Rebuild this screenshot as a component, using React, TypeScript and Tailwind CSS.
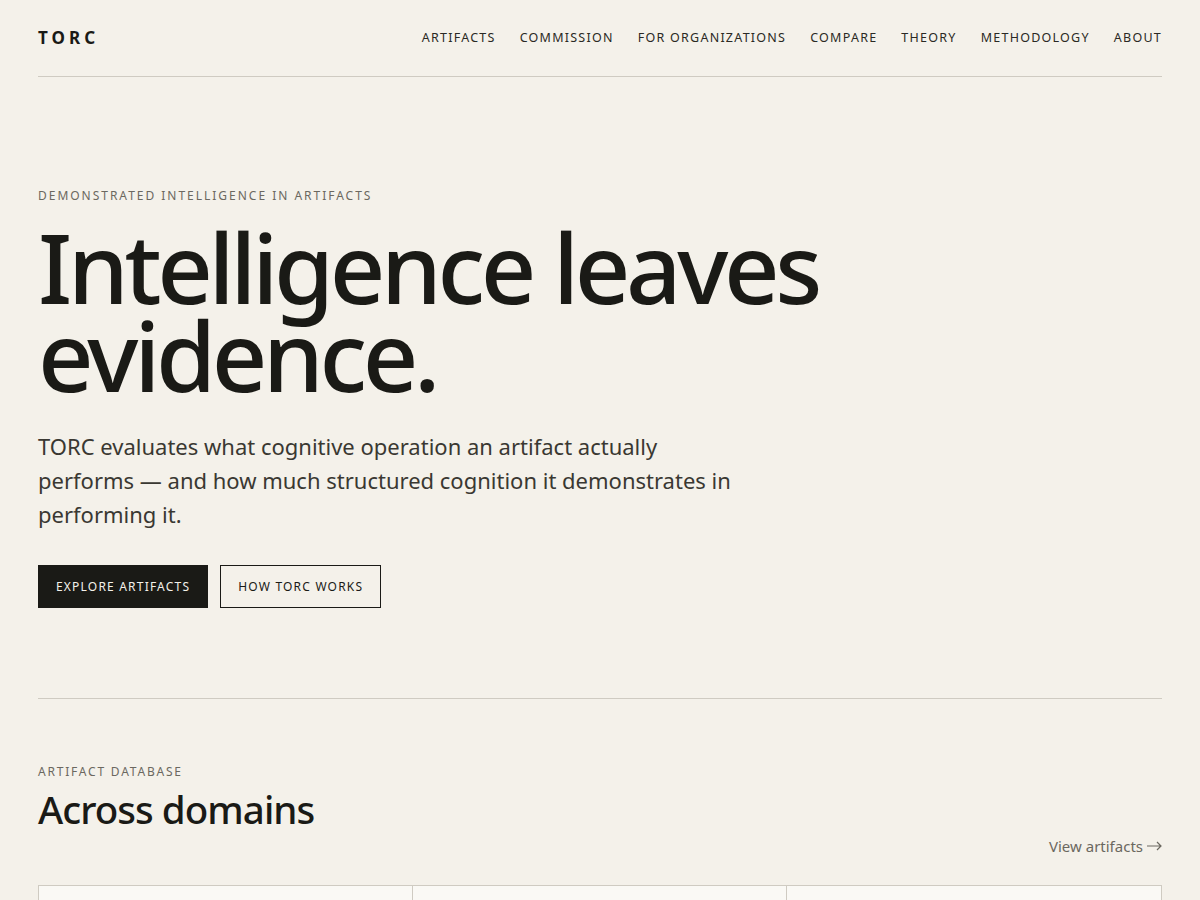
export default function App() {
  const nav = ["Artifacts", "Commission", "For Organizations", "Compare", "Theory", "Methodology", "About"];
  return (
    <main className="min-h-screen bg-[#f4f1ea] text-[#1a1a16] font-['Noto_Sans',sans-serif]">
      <div className="px-[38px]">
        {/* Header */}
        <header className="flex items-center justify-between h-[77px] border-b border-[#cfcbc2]">
          <div className="text-[17px] font-bold tracking-[0.24em]">TORC</div>
          <nav className="flex gap-[24px]">
            {nav.map((n) => (
              <a key={n} href="#" className="text-[12.5px] uppercase tracking-[0.1em] text-[#2a2924]">
                {n}
              </a>
            ))}
          </nav>
        </header>

        {/* Hero */}
        <section className="pt-[110px] pb-[90px] border-b border-[#cfcbc2]">
          <p className="text-[12px] uppercase tracking-[0.165em] text-[#6b6860]">Demonstrated intelligence in artifacts</p>
          <h1 className="mt-[17px] text-[97px] leading-[88px] font-medium tracking-[-0.045em]">
            Intelligence leaves
            <br />
            evidence.
          </h1>
          <p className="mt-[31px] max-w-[700px] text-[22px] leading-[34px] text-[#3a3832]">
            TORC evaluates what cognitive operation an artifact actually performs — and how much structured cognition it demonstrates in performing it.
          </p>
          <div className="mt-[34px] flex gap-[12px]">
            <a href="#" className="h-[43px] px-[18px] flex items-center bg-[#1a1a16] text-[#f4f1ea] text-[12px] uppercase tracking-[0.1em]">
              Explore artifacts
            </a>
            <a href="#" className="h-[43px] px-[17px] flex items-center border border-[#1a1a16] text-[12px] uppercase tracking-[0.1em]">
              How TORC works
            </a>
          </div>
        </section>

        {/* Artifact database */}
        <section className="pt-[64px]">
          <p className="text-[12px] uppercase tracking-[0.15em] text-[#6b6860]">Artifact database</p>
          <h2 className="mt-[2px] text-[38.5px] leading-[52px] font-medium tracking-[-0.025em]">Across domains</h2>
          <div className="flex justify-end">
            <a href="#" className="flex items-center gap-[4px] text-[15px] text-[#6b6860]">
              View artifacts
              <svg width="15" height="10" viewBox="0 0 15 10" fill="none" stroke="currentColor" strokeWidth="1.2">
                <path d="M0 5h14M10 1l4 4-4 4" />
              </svg>
            </a>
          </div>
          <div className="mt-[27px] grid grid-cols-3 border border-[#cfcbc2] bg-[#faf9f5] h-[200px]">
            <div className="border-r border-[#cfcbc2]" />
            <div className="border-r border-[#cfcbc2]" />
            <div />
          </div>
        </section>
      </div>
    </main>
  );
}
